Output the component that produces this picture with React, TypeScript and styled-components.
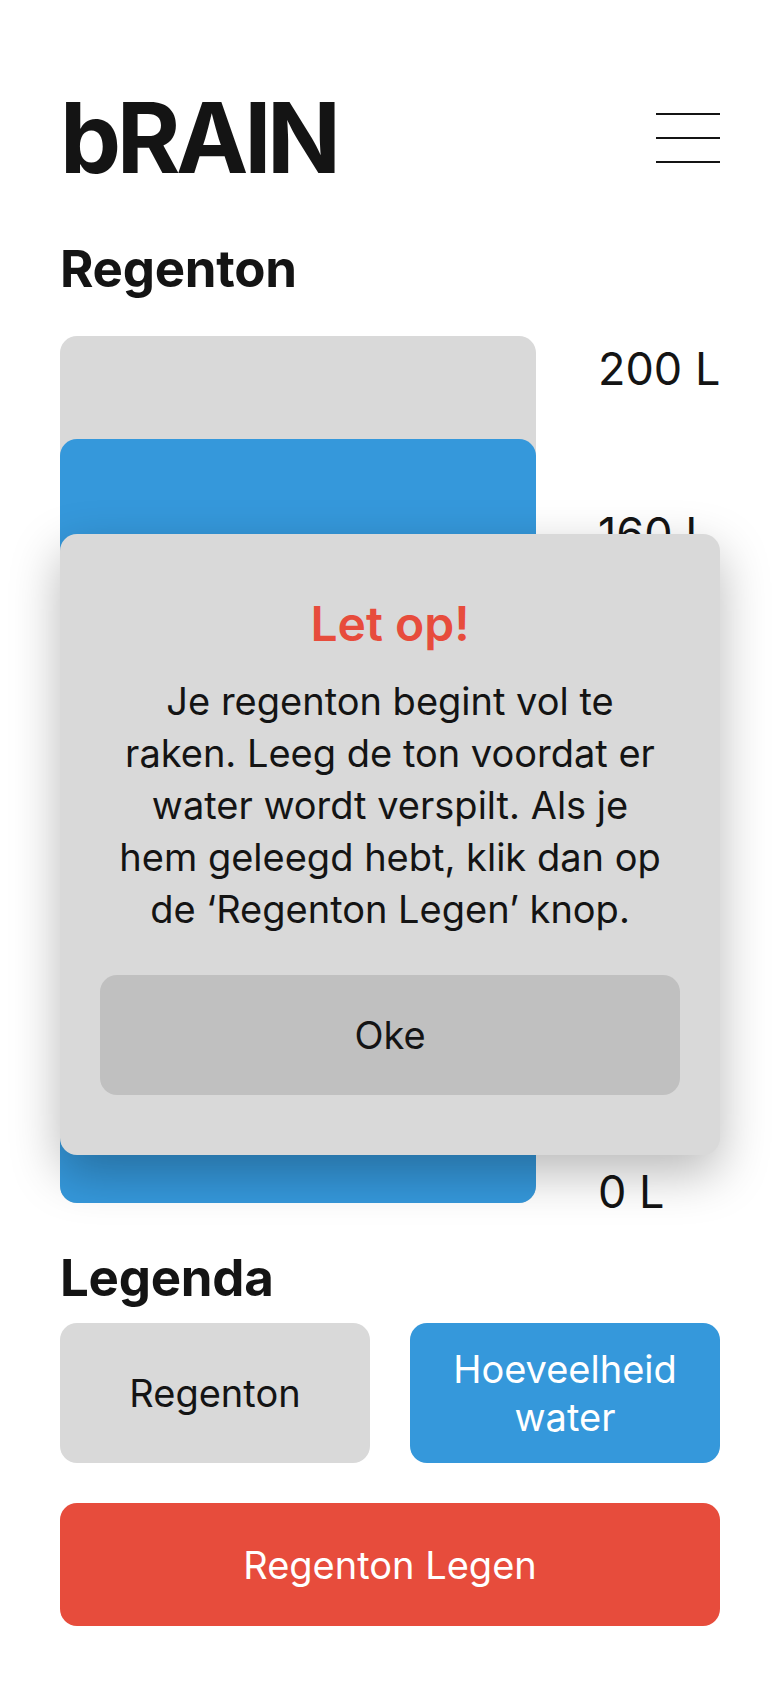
import { createGlobalStyle, styled } from "styled-components";

const GlobalStyle = createGlobalStyle`
  html, body {
    margin: 0;
    padding: 0;
    background: #fff;
  }
  body {
    font-family: Inter, "Noto Sans", "Liberation Sans", sans-serif;
    color: #141414;
  }
  * {
    box-sizing: border-box;
  }
`;

const Page = styled.div`
  position: relative;
  width: 780px;
  min-height: 1688px;
  padding: 88px 60px 0;
`;

const Header = styled.header`
  display: flex;
  align-items: center;
  justify-content: space-between;
  height: 100px;
`;

const Logo = styled.h1`
  margin: 0;
  font-size: 97px;
  line-height: 100px;
  font-weight: 700;
  letter-spacing: -0.045em;
  color: #141414;
`;

const Burger = styled.button`
  display: flex;
  flex-direction: column;
  justify-content: space-between;
  width: 64px;
  height: 50px;
  padding: 0;
  border: 0;
  background: none;

  & span {
    display: block;
    height: 2px;
    background: #141414;
  }
`;

const Heading = styled.h2<{ $top: number; $bottom: number }>`
  margin: ${(p) => p.$top}px 0 ${(p) => p.$bottom}px;
  font-size: 51px;
  line-height: 58px;
  font-weight: 700;
  letter-spacing: -0.005em;
  color: #141414;
`;

const TankRow = styled.div`
  display: flex;
  align-items: flex-start;
  gap: 62px;
`;

const Tank = styled.div`
  display: flex;
  flex-direction: column;
  justify-content: flex-end;
  flex-shrink: 0;
  width: 476px;
  height: 867px;
  border-radius: 17px;
  background: #d9d9d9;
  overflow: hidden;
`;

const Water = styled.div`
  width: 100%;
  border-radius: 17px 17px 0 0;
  background: #3598db;
`;

const Scale = styled.div`
  display: flex;
  flex-direction: column;
  justify-content: space-between;
  height: 881px;
  margin-top: 4px;
  font-size: 45px;
  line-height: 58px;
  font-weight: 400;
  white-space: nowrap;
  color: #141414;
`;

const Modal = styled.div`
  position: absolute;
  top: 534px;
  left: 60px;
  width: 660px;
  padding: 61px 40px 60px;
  border-radius: 17px;
  background: #d9d9d9;
  box-shadow: 0 18px 50px rgba(0, 0, 0, 0.28);
  text-align: center;
`;

const ModalTitle = styled.h3`
  margin: 0;
  font-size: 48px;
  line-height: 58px;
  font-weight: 600;
  color: #e74c3c;
`;

const ModalText = styled.p`
  margin: 22px auto 0;
  max-width: 545px;
  font-size: 38px;
  line-height: 52px;
  color: #141414;
`;

const Button = styled.button<{ $bg: string; $fg: string; $h: number }>`
  display: flex;
  align-items: center;
  justify-content: center;
  width: 100%;
  height: ${(p) => p.$h}px;
  padding: 0 20px;
  border: 0;
  border-radius: 17px;
  background: ${(p) => p.$bg};
  color: ${(p) => p.$fg};
  font-family: inherit;
  font-size: 38px;
  line-height: 48px;
  font-weight: 400;
  text-align: center;
`;

const OkButton = styled(Button)`
  margin-top: 40px;
`;

const LegendGrid = styled.div`
  display: grid;
  grid-template-columns: 1fr 1fr;
  gap: 40px;
`;

const EmptyButton = styled(Button)`
  margin-top: 40px;
`;

const levels = [200, 160, 120, 80, 40, 0];
const waterLevel = 0.881;

const App = () => {
  return (<>
    <GlobalStyle />
    <Page>
      <Header>
        <Logo>bRAIN</Logo>
        <Burger aria-label="menu">
          <span />
          <span />
          <span />
        </Burger>
      </Header>

      <Heading $top={52} $bottom={38}>Regenton</Heading>

      <TankRow>
        <Tank>
          <Water style={{ height: `${waterLevel * 100}%` }} />
        </Tank>
        <Scale>
          {levels.map((l) => (
            <span key={l}>{l} L</span>
          ))}
        </Scale>
      </TankRow>

      <Heading $top={28} $bottom={16}>Legenda</Heading>

      <LegendGrid>
        <Button $bg="#d9d9d9" $fg="#141414" $h={140}>Regenton</Button>
        <Button $bg="#3598db" $fg="#ffffff" $h={140}>Hoeveelheid water</Button>
      </LegendGrid>

      <EmptyButton $bg="#e74c3c" $fg="#ffffff" $h={123}>Regenton Legen</EmptyButton>

      <Modal role="dialog">
        <ModalTitle>Let op!</ModalTitle>
        <ModalText>
          Je regenton begint vol te raken. Leeg de ton voordat er water wordt verspilt. Als je hem geleegd hebt, klik dan op de ‘Regenton Legen’ knop.
        </ModalText>
        <OkButton $bg="#c0c0c0" $fg="#141414" $h={120}>Oke</OkButton>
      </Modal>
    </Page>
  </>);
}

export default App
